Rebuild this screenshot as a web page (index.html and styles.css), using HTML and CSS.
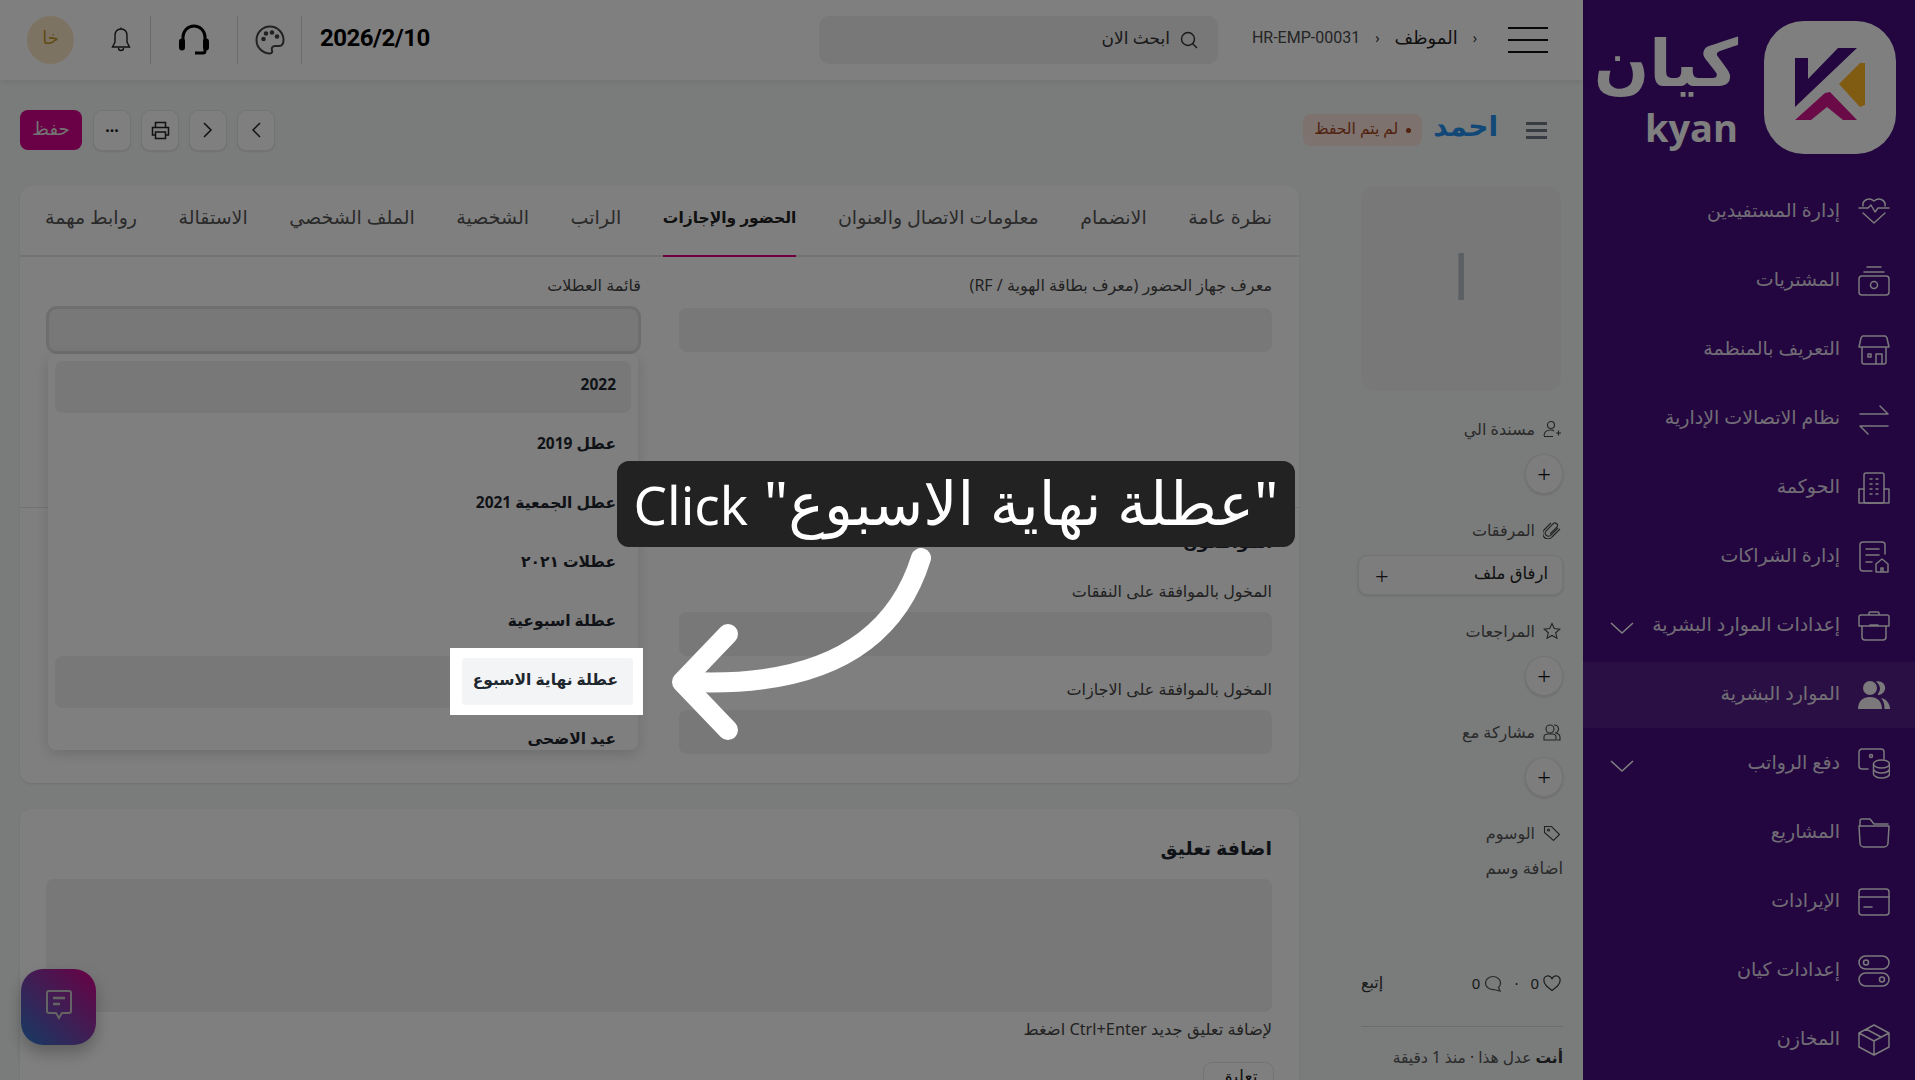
FILE: index.html
```html
<!DOCTYPE html>
<html lang="ar" dir="rtl">
<head>
    <meta charset="UTF-8">
    <title>HR-EMP-00031</title>
    <link rel="stylesheet" href="styles.css">
</head>
<body>
    <div class="app">
        <aside class="sidebar">
            <div class="brand">
                <div class="brand-tile">
                    <svg width="132" height="133" viewBox="0 0 132 133">
                        <polygon points="31,37 44,37 44,58 74,27 93,27 31,86" fill="#460c7e"/>
                        <polygon points="75,63 96,42 101,42 101,84 96,86" fill="#ffb822"/>
                        <polygon points="31,99 61,72 66,71 93,99 79,99 63,86 47,99" fill="#d4148f"/>
                    </svg>
                </div>
                <div class="brand-name">
                    <span class="brand-ar">كيان</span>
                    <span class="brand-en">kyan</span>
                </div>
            </div>
            <nav class="nav">
                <a class="nav-item">
                    <svg class="nav-icon" viewBox="0 0 32 32"><path d="M5 10C4 4 11 1 16 5C21 1 28 4 27 10M1 12H10L13 9L17 16L20 12H31M5 17L16 27L27 17"/></svg>
                    <span>إدارة المستفيدين</span>
                </a>
                <a class="nav-item">
                    <svg class="nav-icon" viewBox="0 0 32 32"><path d="M9 2H23M6 7H26"/><rect x="1" y="11" width="30" height="19" rx="3"/><circle cx="16" cy="20" r="3.5"/></svg>
                    <span>المشتريات</span>
                </a>
                <a class="nav-item">
                    <svg class="nav-icon" viewBox="0 0 32 32"><path d="M5 2H27Q28 2 29 4L31 13H1L3 4Q4 2 5 2ZM4 14V28Q4 30 6 30H26Q28 30 28 28V14M18 30V20H24V30M10 20H13V23H10Z"/></svg>
                    <span>التعريف بالمنظمة</span>
                </a>
                <a class="nav-item">
                    <svg class="nav-icon" viewBox="0 0 32 32"><path d="M2 11H30L22 3M30 23H2L10 31"/></svg>
                    <span>نظام الاتصالات الإدارية</span>
                </a>
                <a class="nav-item">
                    <svg class="nav-icon" viewBox="0 0 32 32"><rect x="6" y="1" width="20" height="30" rx="2"/><path d="M6 17H1V31H31V17H26M12 7H14M18 7H20M12 12H14M18 12H20M12 17H14M18 17H20M12 22H14M18 22H20"/></svg>
                    <span>الحوكمة</span>
                </a>
                <a class="nav-item">
                    <svg class="nav-icon" viewBox="0 0 32 32"><path d="M27 13V4A3 3 0 0 0 24 1H5A3 3 0 0 0 2 4V27A3 3 0 0 0 5 30H14M8 8H21M8 14H21M8 21H14M18 31V23L24 18L30 23V31ZM23 31V27H25V31"/></svg>
                    <span>إدارة الشراكات</span>
                </a>
                <a class="nav-item">
                    <svg class="nav-icon" viewBox="0 0 32 32"><path d="M11 5V3A1 1 0 0 1 12 2H20A1 1 0 0 1 21 3V5M3 5H29A2 2 0 0 1 31 7V16H1V7A2 2 0 0 1 3 5ZM4 16V27A3 3 0 0 0 7 30H25A3 3 0 0 0 28 27V16M12 15H20"/></svg>
                    <span>إعدادات الموارد البشرية</span>
                    <svg class="nav-chevron" viewBox="0 0 24 14"><path d="M1 2L12 12L23 2"/></svg>
                </a>
                <a class="nav-item active">
                    <svg class="nav-icon filled" viewBox="0 0 32 32"><circle cx="12" cy="9" r="7"/><path d="M0 30C0 22 5 18 12 18C19 18 24 22 24 30ZM18 2.500C24 1 28 6 27 10C26.500 13 24 15.500 21 16C19 16 20 15 21 13C23 10 22 6 18 2.500ZM23 19C28 20 32 24 32 30H26.500C26.500 26 26 22 23 19Z"/></svg>
                    <span>الموارد البشرية</span>
                </a>
                <a class="nav-item">
                    <svg class="nav-icon" viewBox="0 0 32 32"><path d="M10 21H4A3 3 0 0 1 1 18V4A3 3 0 0 1 4 1H23A3 3 0 0 1 26 4V11"/><circle cx="13" cy="8" r="1.5"/><ellipse cx="23.500" cy="16" rx="8" ry="4"/><path d="M15.500 16V26C15.500 28 19 30 23.500 30S31.500 28 31.500 26V16M15.500 21C15.500 23 19 25 23.500 25S31.500 23 31.500 21"/></svg>
                    <span>دفع الرواتب</span>
                    <svg class="nav-chevron" viewBox="0 0 24 14"><path d="M1 2L12 12L23 2"/></svg>
                </a>
                <a class="nav-item">
                    <svg class="nav-icon" viewBox="0 0 32 32"><path d="M2 8V4A2 2 0 0 1 4 2H12L16 7H30M1 9H31L30 26A4 4 0 0 1 26 30H6A4 4 0 0 1 2 26Z"/></svg>
                    <span>المشاريع</span>
                </a>
                <a class="nav-item">
                    <svg class="nav-icon" viewBox="0 0 32 32"><rect x="1" y="3" width="30" height="26" rx="3"/><path d="M1 11H31M6 21H14"/></svg>
                    <span>الإيرادات</span>
                </a>
                <a class="nav-item">
                    <svg class="nav-icon" viewBox="0 0 32 32"><rect x="1" y="1" width="30" height="13" rx="6.500"/><circle cx="8" cy="7.500" r="2.500"/><rect x="1" y="18" width="30" height="13" rx="6.500"/><circle cx="24" cy="24.500" r="2.500"/></svg>
                    <span>إعدادات كيان</span>
                </a>
                <a class="nav-item">
                    <svg class="nav-icon" viewBox="0 0 32 32"><path d="M16 1L31 9V23L16 31L1 23V9ZM1 9L16 17L31 9M16 17V31M8 5L23 13"/></svg>
                    <span>المخازن</span>
                </a>
            </nav>
        </aside>

        <div class="main">
            <header class="topbar">
                <div class="burger"><i></i><i></i><i></i></div>
                <div class="crumbs">
                    <span class="crumb-sep">‹</span>
                    <span class="crumb-doc">الموظف</span>
                    <span class="crumb-sep">‹</span>
                    <span class="crumb-id">HR-EMP-00031</span>
                </div>
                <div class="search">
                    <svg width="18" height="18" viewBox="0 0 18 18" fill="none" stroke="#333" stroke-width="1.400"><circle cx="8" cy="8" r="6.500"/><path d="M12.500 12.500L17 17"/></svg>
                    <span>ابحث الان</span>
                </div>
                <div class="top-tools">
                    <div class="date">2026/2/10</div>
                    <div class="tool tool-palette">
                        <svg width="30" height="30" viewBox="0 0 30 30" fill="none" stroke="#444" stroke-width="2"><path d="M15 1.500C7.500 1.500 1.500 7.500 1.500 15S7.500 28.500 15 28.500C17 28.500 17.500 27 17 25.500C16 23 17.500 21 20 21H24C26.500 21 28.500 19 28.500 15C28.500 7.500 22.500 1.500 15 1.500Z"/><circle cx="8.500" cy="14" r="1.300" fill="#444"/><circle cx="11" cy="8.500" r="1.300" fill="#444"/><circle cx="17" cy="7.500" r="1.300" fill="#444"/><circle cx="22" cy="11.500" r="1.300" fill="#444"/></svg>
                    </div>
                    <div class="tool tool-head">
                        <svg width="30" height="34" viewBox="0 0 30 34" fill="none" stroke="#000" stroke-width="3"><path d="M4 20V14A11 11 0 0 1 26 14V20"/><rect x="1.500" y="17" width="3" height="9" rx="1.500" fill="#000"/><rect x="25.500" y="17" width="3" height="9" rx="1.500" fill="#000"/><path d="M26 26V28A2 2 0 0 1 24 30H16"/></svg>
                    </div>
                    <div class="tool tool-bell">
                        <svg width="20" height="26" viewBox="0 0 20 26" fill="none" stroke="#222" stroke-width="1.400"><path d="M10 2C6 2 4 5 4 9V15L1.500 20H18.500L16 15V9C16 5 14 2 10 2ZM7.500 21A2.500 2.500 0 0 0 12.500 21M10 .500V2"/></svg>
                    </div>
                    <div class="avatar">خا</div>
                </div>
            </header>

            <div class="page-head">
                <div class="head-title">
                    <div class="side-toggle"><i></i><i></i><i></i></div>
                    <h1>احمد</h1>
                    <span class="unsaved">لم يتم الحفظ</span>
                </div>
                <div class="head-actions">
                    <button class="icon-btn"><svg width="10" height="16" viewBox="0 0 10 16" fill="none" stroke="#222" stroke-width="1.500"><path d="M9 1L2 8L9 15"/></svg></button>
                    <button class="icon-btn"><svg width="10" height="16" viewBox="0 0 10 16" fill="none" stroke="#222" stroke-width="1.500"><path d="M1 1L8 8L1 15"/></svg></button>
                    <button class="icon-btn"><svg width="19" height="19" viewBox="0 0 19 19" fill="none" stroke="#222" stroke-width="1.500"><path d="M4.500 6V1.500H14.500V6M4.500 14H1.500V6.500H17.500V14H14.500M4.500 11H14.500V17.500H4.500Z"/></svg></button>
                    <button class="icon-btn dots">···</button>
                    <button class="save-btn">حفظ</button>
                </div>
            </div>

            <div class="content">
                <div class="form-side">
                    <div class="image-tile"><span>ا</span></div>
                    <div class="side-label">
                        <svg viewBox="0 0 18 18"><circle cx="8" cy="5" r="3.500"/><path d="M1 16C1 12 4 10 8 10C9 10 10 10 11 11M1 16.500H10M13 13H18M15.500 10.500V15.500"/></svg>
                        <span>مسندة الي</span>
                    </div>
                    <button class="add-circle">+</button>
                    <div class="side-label">
                        <svg viewBox="0 0 18 18"><path d="M15 7L8 14A3 3 0 0 1 3 10L10 3A2 2 0 0 1 14 6L7 13"/><path d="M17 8L9 16A5 5 0 0 1 1 9L8 2"/></svg>
                        <span>المرفقات</span>
                    </div>
                    <button class="attach-btn"><span>ارفاق ملف</span><b>+</b></button>
                    <div class="side-label">
                        <svg viewBox="0 0 18 18"><path d="M9 1.500L11.300 6.500L16.800 7.100L12.700 10.800L13.900 16.200L9 13.400L4.100 16.200L5.300 10.800L1.200 7.100L6.700 6.500Z"/></svg>
                        <span>المراجعات</span>
                    </div>
                    <button class="add-circle">+</button>
                    <div class="side-label">
                        <svg viewBox="0 0 18 18"><circle cx="7" cy="6" r="4"/><path d="M1 17V14C1 12 3 11 5 11H9C11 11 13 12 13 14V17ZM11 2A4 4 0 0 1 12 10C15 10 17 12 17 14V17H14"/></svg>
                        <span>مشاركة مع</span>
                    </div>
                    <button class="add-circle">+</button>
                    <div class="side-label">
                        <svg viewBox="0 0 18 18"><path d="M1.500 2.500H8.500L16.500 10.500L10.500 16.500L1.500 8.500Z"/><circle cx="5.500" cy="6" r="1"/></svg>
                        <span>الوسوم</span>
                    </div>
                    <div class="add-tag">اضافة وسم</div>
                    <div class="stats">
                        <svg width="18" height="17" viewBox="0 0 18 17" fill="none" stroke="#333" stroke-width="1.200"><path d="M9 15.500C4 12 1 9.500 1 6A4 4 0 0 1 9 4A4 4 0 0 1 17 6C17 9.500 14 12 9 15.500Z"/></svg>
                        <span>0</span>
                        <span class="stat-dot">·</span>
                        <svg width="18" height="18" viewBox="0 0 18 18" fill="none" stroke="#555" stroke-width="1.200"><path d="M16 17L14.500 13.500A7.500 6.500 0 1 0 10 15.500Z"/></svg>
                        <span>0</span>
                        <span class="follow">إتبع</span>
                    </div>
                    <div class="activity"><b>أنت</b> عدل هذا · منذ 1 دقيقة</div>
                </div>

                <div class="form-col">
                    <section class="card form-card">
                        <div class="tabs">
                            <a class="tab">نظرة عامة</a>
                            <a class="tab">الانضمام</a>
                            <a class="tab">معلومات الاتصال والعنوان</a>
                            <a class="tab active">الحضور والإجازات</a>
                            <a class="tab">الراتب</a>
                            <a class="tab">الشخصية</a>
                            <a class="tab">الملف الشخصي</a>
                            <a class="tab">الاستقالة</a>
                            <a class="tab">روابط مهمة</a>
                        </div>
                        <div class="form-section top-section">
                            <div class="field">
                                <label>معرف جهاز الحضور (معرف بطاقة الهوية / RF)</label>
                                <div class="input"></div>
                            </div>
                            <div class="field field-open">
                                <label>قائمة العطلات</label>
                                <div class="input focused"></div>
                                <div class="dropdown">
                                    <div class="option hover">2022</div>
                                    <div class="option">عطل 2019</div>
                                    <div class="option">عطل الجمعية 2021</div>
                                    <div class="option">عطلات ٢٠٢١</div>
                                    <div class="option">عطلة اسبوعية</div>
                                    <div class="option hover">عطلة نهاية الاسبوع</div>
                                    <div class="option">عيد الاضحى</div>
                                </div>
                            </div>
                        </div>
                        <div class="form-section approvers">
                            <h3>الموافقون</h3>
                            <div class="field">
                                <label>المخول بالموافقة على النفقات</label>
                                <div class="input"></div>
                            </div>
                            <div class="field">
                                <label>المخول بالموافقة على الاجازات</label>
                                <div class="input"></div>
                            </div>
                        </div>
                    </section>

                    <section class="card comment-card">
                        <h3>اضافة تعليق</h3>
                        <div class="textarea"></div>
                        <p class="hint">لإضافة تعليق جديد Ctrl+Enter اضغط</p>
                        <button class="comment-btn">تعليق</button>
                    </section>
                </div>
            </div>
        </div>
    </div>

    <button class="chat-fab">
        <svg width="26" height="30" viewBox="0 0 26 30" fill="none" stroke="#c8c8c8" stroke-width="2"><path d="M3 1H23A2 2 0 0 1 25 3V21A2 2 0 0 1 23 23H16L13 28L10 23H3A2 2 0 0 1 1 21V3A2 2 0 0 1 3 1Z"/><path d="M7 8H19M7 14H14" stroke-width="2.500"/></svg>
    </button>

    <!-- dim layer + tutorial callout -->
    <div class="dim"></div>
    <div class="spot"><div class="spot-item">عطلة نهاية الاسبوع</div></div>
    <div class="callout" dir="ltr"><span class="callout-en">Click</span> "عطلة نهاية الاسبوع"</div>
    <svg class="arrow" width="1915" height="1080" viewBox="0 0 1915 1080" fill="none" stroke="#fff" stroke-width="20" stroke-linecap="round" stroke-linejoin="round">
        <path d="M921 558Q880 690 690 682"/>
        <path d="M728 634L682 682L728 730"/>
    </svg>
</body>
</html>
```

FILE: styles.css
```css
* {
    box-sizing: border-box;
    margin: 0;
    padding: 0;
}

body {
    width: 1915px;
    height: 1080px;
    overflow: hidden;
    position: relative;
    background: #f5f8f8;
    font-family: "Noto Sans", "DejaVu Sans", sans-serif;
    color: #1f272e;
}

button {
    font-family: inherit;
}

.app {
    display: grid;
    grid-template-columns: 332px 1fr;
    height: 1080px;
}

/* sidebar */

.sidebar {
    background: #460c7e;
    color: #fff;
    padding-top: 21px;
    overflow: hidden;
}

.brand {
    display: flex;
    align-items: center;
    gap: 26px;
    padding-right: 19px;
    height: 133px;
}

.brand-tile {
    width: 132px;
    height: 133px;
    background: #fff;
    border-radius: 40px;
    flex: none;
}

.brand-name {
    display: flex;
    flex-direction: column;
    align-items: flex-start;
    font-weight: bold;
    line-height: 1;
}

.brand-ar {
    font-size: 65px;
    line-height: 84px;
    margin-top: -10px;
}

.brand-en {
    font-family: "Open Sans", sans-serif;
    font-size: 38px;
    line-height: 40px;
    margin-top: 4px;
}

.nav {
    display: flex;
    flex-direction: column;
    gap: 3px;
    margin-top: 25px;
}

.nav-item {
    display: flex;
    align-items: center;
    height: 66px;
    padding: 0 25px 0 27px;
    font-size: 19px;
    color: rgba(255, 255, 255, 0.85);
}

.nav-item span {
    padding-bottom: 5px;
}

.nav-item.active {
    background: rgba(255, 255, 255, 0.08);
}

.nav-icon {
    width: 32px;
    height: 32px;
    margin-left: 18px;
    flex: none;
    fill: none;
    stroke: #fff;
    stroke-width: 1.5;
    stroke-linejoin: round;
    stroke-linecap: round;
    opacity: 0.95;
}

.nav-icon.filled {
    fill: #fff;
    stroke: none;
}

.nav-chevron {
    width: 24px;
    height: 14px;
    margin-right: auto;
    margin-top: 3px;
    fill: none;
    stroke: #fff;
    stroke-width: 1.5;
}

/* top bar */

.topbar {
    display: flex;
    align-items: center;
    height: 80px;
    padding: 0 35px 0 27px;
    background: #fff;
    box-shadow: 0 2px 6px rgba(0, 0, 0, 0.08);
}

.burger {
    width: 40px;
    display: flex;
    flex-direction: column;
    gap: 10px;
}

.burger i {
    display: block;
    height: 2px;
    background: #111;
}

.crumbs {
    display: flex;
    align-items: center;
    margin-right: 30px;
    font-size: 18px;
    color: #333;
    margin-top: -6px;
}

.crumb-sep {
    font-size: 14px;
    margin: 0 1px;
}

.crumb-doc {
    margin: 0 14px;
    color: #222;
}

.crumb-id {
    margin-right: 14px;
    font-family: "Roboto", sans-serif;
    font-size: 16px;
    color: #4a4a4a;
}

.search {
    display: flex;
    align-items: center;
    gap: 10px;
    width: 399px;
    height: 48px;
    margin-right: 34px;
    padding: 0 20px;
    background: #f0f0f0;
    border-radius: 10px;
    font-size: 17px;
    color: #333;
}

.search span {
    padding-bottom: 5px;
}

.top-tools {
    display: flex;
    align-items: center;
    height: 48px;
    margin-right: auto;
}

.date {
    font-family: "Roboto", sans-serif;
    font-size: 24px;
    font-weight: 700;
    letter-spacing: -0.5px;
    color: #000;
    width: 127px;
    text-align: left;
    margin-top: -4px;
    direction: ltr;
    padding-left: 18px;
}

.tool {
    display: flex;
    align-items: center;
    justify-content: center;
    height: 48px;
    border-right: 1px solid #d4d4d4;
}

.tool-palette {
    width: 64px;
}

.tool-head {
    width: 87px;
}

.tool-bell {
    width: 60px;
}

.avatar {
    width: 47px;
    height: 48px;
    margin-right: 17px;
    border-radius: 50%;
    background: #fbe7c6;
    color: #c9952c;
    font-size: 18px;
    display: flex;
    align-items: center;
    justify-content: center;
    padding-bottom: 6px;
}

/* page head */

.page-head {
    display: flex;
    align-items: center;
    justify-content: space-between;
    height: 106px;
    padding: 0 36px 6px 20px;
}

.head-title {
    display: flex;
    align-items: center;
}

.side-toggle {
    width: 21px;
    display: flex;
    flex-direction: column;
    gap: 4px;
    margin-left: 28px;
}

.side-toggle i {
    display: block;
    height: 3px;
    background: #6f7a85;
}

.head-title h1 {
    font-size: 28px;
    font-weight: bold;
    color: #2490ef;
    margin-left: 11px;
    margin-top: -11px;
}

.unsaved {
    display: flex;
    align-items: center;
    height: 32px;
    padding: 0 11px 4px;
    background: #fbe4dc;
    border-radius: 8px;
    font-size: 15.500px;
    color: #a1421a;
}

.unsaved::before {
    content: "";
    width: 5px;
    height: 5px;
    border-radius: 50%;
    background: #a1421a;
    margin: 4px 0 0 8px;
}

.head-actions {
    display: flex;
    align-items: center;
    gap: 10px;
}

.icon-btn {
    width: 38px;
    height: 41px;
    background: #fff;
    border: 1px solid #e6e6e6;
    border-radius: 9px;
    box-shadow: 0 1px 2px rgba(0, 0, 0, 0.1);
    display: flex;
    align-items: center;
    justify-content: center;
}

.dots {
    font-size: 16px;
    font-weight: bold;
    color: #222;
}

.save-btn {
    width: 62px;
    height: 40px;
    margin-right: 1px;
    padding-bottom: 5px;
    border: none;
    border-radius: 8px;
    background: #d4008a;
    color: #e8e8e8;
    font-size: 18px;
}

/* content */

.content {
    display: grid;
    grid-template-columns: 202px 1fr;
    gap: 62px;
    padding: 0 20px;
}

.form-side {
    font-size: 16px;
    color: #555;
}

.image-tile {
    width: 200px;
    height: 205px;
    margin-right: 2px;
    margin-bottom: 28px;
    padding-bottom: 26px;
    background: #f0f0f0;
    border-radius: 14px;
    display: flex;
    align-items: center;
    justify-content: center;
    font-size: 62px;
    color: #b8c0c8;
}

.side-label {
    display: flex;
    align-items: center;
    gap: 8px;
    height: 20px;
    margin-top: 26px;
    margin-bottom: 15px;
    padding-right: 2px;
}

.side-label svg {
    width: 18px;
    height: 18px;
    flex: none;
    fill: none;
    stroke: #444;
    stroke-width: 1.100;
}

.add-circle {
    display: block;
    width: 38px;
    height: 40px;
    border-radius: 50%;
    border: 1px solid #e6e6e6;
    background: #fbfbfb;
    box-shadow: 0 1px 3px rgba(0, 0, 0, 0.15);
    font-size: 24px;
    font-weight: 300;
    line-height: 36px;
    color: #111;
}

.attach-btn {
    display: flex;
    align-items: center;
    justify-content: space-between;
    width: 205px;
    height: 40px;
    padding: 0 14px;
    border: 1px solid #e6e6e6;
    border-radius: 9px;
    background: #fbfbfb;
    box-shadow: 0 1px 3px rgba(0, 0, 0, 0.15);
    font-size: 16.500px;
    color: #222;
}

.attach-btn span {
    padding-bottom: 5px;
}

.attach-btn b {
    font-size: 24px;
    font-weight: 300;
    margin-left: 2px;
}

.add-tag {
    height: 20px;
    margin-top: 1px;
    font-size: 16.500px;
    line-height: 20px;
}

.stats {
    display: flex;
    align-items: center;
    gap: 4px;
    height: 24px;
    margin-top: 93px;
    padding-right: 2px;
    font-size: 15px;
    color: #333;
}

.stat-dot {
    margin: 0 8px;
}

.follow {
    margin-right: auto;
    font-size: 16px;
    padding-bottom: 3px;
}

.activity {
    margin-top: 31px;
    padding-top: 20px;
    border-top: 1px solid #d8d8d8;
    font-size: 15.500px;
    line-height: 20px;
    white-space: nowrap;
}

.activity b {
    color: #333;
}

/* cards */

.card {
    background: #fff;
    border-radius: 12px;
    box-shadow: 0 1px 3px rgba(0, 0, 0, 0.1);
}

.form-card {
    height: 597px;
    display: flex;
    flex-direction: column;
}

.tabs {
    display: flex;
    justify-content: space-between;
    height: 71px;
    padding: 0 27px 0 25px;
    border-bottom: 2px solid #e6e6e6;
    font-size: 19px;
    color: #555;
}

.tab {
    display: flex;
    align-items: center;
    padding-bottom: 8px;
    white-space: nowrap;
}

.tab.active {
    font-size: 15.500px;
    font-weight: bold;
    color: #222;
    border-bottom: 2px solid #e0007f;
    margin-bottom: -2px;
}

.form-section {
    padding: 0 27px 0 26px;
}

.top-section {
    display: grid;
    grid-template-columns: 593px 595px;
    gap: 38px;
    height: 251px;
    padding-top: 19px;
    border-bottom: 1px solid #e6e6e6;
}

.field label {
    display: block;
    height: 20px;
    font-size: 16px;
    line-height: 18px;
    color: #444;
    white-space: nowrap;
}

.input {
    height: 44px;
    margin-top: 12px;
    background: #f0f0f0;
    border-radius: 8px;
}

.field-open {
    position: relative;
}

.input.focused {
    height: 48px;
    margin-top: 10px;
    border: 3px solid #dcdcdc;
    border-radius: 11px;
}

.dropdown {
    position: absolute;
    top: 78px;
    right: 3px;
    width: 590px;
    height: 396px;
    padding: 7px;
    overflow: hidden;
    display: flex;
    flex-direction: column;
    gap: 7px;
    background: #fff;
    border-radius: 8px;
    box-shadow: 0 4px 14px rgba(0, 0, 0, 0.15);
}

.option {
    flex: none;
    display: flex;
    align-items: center;
    height: 52px;
    padding: 0 15px 6px;
    border-radius: 8px;
    font-size: 15.500px;
    font-weight: bold;
    color: #1f272e;
}

.option.hover {
    background: #f1f1f1;
}

.approvers h3 {
    height: 20px;
    margin-top: 24px;
    margin-bottom: 30px;
    font-size: 17px;
    line-height: 20px;
}

.approvers .field + .field {
    margin-top: 24px;
}

.approvers .field {
    width: 593px;
}

.approvers .input {
    margin-top: 10px;
}

.comment-card {
    height: 300px;
    margin-top: 26px;
    padding: 27px 27px 0 26px;
}

.comment-card h3 {
    height: 26px;
    font-size: 19px;
    line-height: 24px;
}

.textarea {
    height: 133px;
    margin-top: 17px;
    background: #f0f0f0;
    border-radius: 8px;
}

.hint {
    margin-top: 8px;
    font-size: 16.300px;
    line-height: 18px;
    color: #444;
}

.comment-btn {
    display: block;
    width: 71px;
    height: 40px;
    margin-top: 24px;
    margin-right: -2px;
    padding-bottom: 14px;
    border: 1px solid #e6e6e6;
    border-radius: 9px;
    background: #fff;
    font-size: 17px;
    color: #222;
}

.chat-fab {
    position: absolute;
    left: 21px;
    top: 969px;
    width: 75px;
    height: 76px;
    border: none;
    border-radius: 22px;
    background: linear-gradient(45deg, #2a78c8, #d4008a);
    box-shadow: 0 8px 16px rgba(0, 0, 0, 0.25);
}

/* overlay */

.dim {
    position: absolute;
    inset: 0;
    background: rgba(0, 0, 0, 0.5);
}

.spot {
    position: absolute;
    left: 450px;
    top: 648px;
    width: 193px;
    height: 67px;
    padding: 10px 10px 10px 12px;
    background: #fff;
}

.spot .spot-item {
    height: 47px;
    padding: 0 15px 5px 0;
    display: flex;
    align-items: center;
    background: #f3f4f6;
    border-radius: 4px;
    font-size: 15.500px;
    font-weight: bold;
    color: #1f272e;
    white-space: nowrap;
}

.callout {
    position: absolute;
    left: 617px;
    top: 461px;
    width: 678px;
    height: 86px;
    background: #222;
    border-radius: 12px;
    color: #fff;
    font-size: 60px;
    line-height: 82px;
    text-align: center;
    white-space: nowrap;
}

.callout-en {
    font-size: 53px;
}

.arrow {
    position: absolute;
    left: 0;
    top: 0;
}
```
